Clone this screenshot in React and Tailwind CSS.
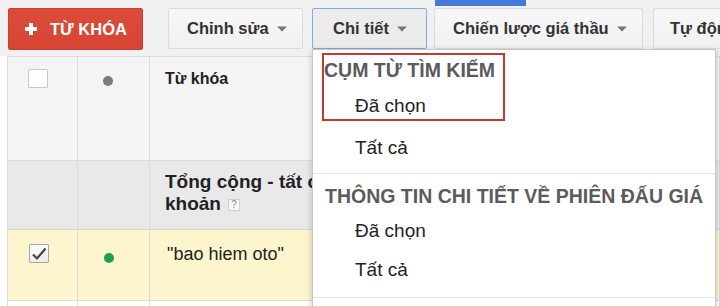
import React from "react";

const Caret = () => (
  <svg width="10" height="6" viewBox="0 0 10 6" className="shrink-0">
    <path d="M0 0.5h10L5 5.5z" fill="#777" />
  </svg>
);

const PlusIcon = () => (
  <svg width="12" height="12" viewBox="0 0 12 12" className="shrink-0">
    <rect x="4" y="0" width="4" height="12" fill="#fff" />
    <rect x="0" y="4" width="12" height="4" fill="#fff" />
  </svg>
);

const ToolButton = ({ label, className = "", active = false }) => (
  <div
    className={`h-[41px] flex items-center shrink-0 rounded-[2px] border text-[16.5px] font-bold text-[#333] ${
      active
        ? "bg-[#ececec] border-[#86a9e6]"
        : "bg-gradient-to-b from-[#f7f7f7] to-[#f1f1f1] border-[#dcdcdc]"
    } ${className}`}
  >
    <span className="whitespace-nowrap">{label}</span>
    <span className="ml-[8px]">
      <Caret />
    </span>
  </div>
);

const Checkbox = ({ checked }) => (
  <div
    className={`w-[20px] h-[19px] border rounded-[1px] flex items-center justify-center ${
      checked
        ? "border-[#a8a8a8] bg-gradient-to-b from-[#fdfdfd] to-[#ececec]"
        : "border-[#c9c9c9] bg-white"
    }`}
  >
    {checked && (
      <svg width="16" height="14" viewBox="0 0 16 14">
        <path d="M2 7.5l4 4L14.5 1.5" fill="none" stroke="#444" strokeWidth="2.2" />
      </svg>
    )}
  </div>
);

function Toolbar() {
  return (
    <div className="relative h-[56px] bg-[#f1f1f1] flex items-start pt-[8px] pl-[8px]">
      <div className="absolute top-0 left-[435px] w-[91px] h-[6px] bg-[#4479d8]" />
      <div className="w-[135px] h-[42px] shrink-0 rounded-[2px] bg-gradient-to-b from-[#dd4b39] to-[#d64434] border border-[#c9402f] flex items-center pl-[16px] text-white font-bold text-[16.5px]">
        <PlusIcon />
        <span className="ml-[13px] whitespace-nowrap">TỪ KHÓA</span>
      </div>
      <ToolButton label="Chỉnh sửa" className="ml-[25px] w-[135px] pl-[18px]" />
      <ToolButton label="Chi tiết" className="ml-[9px] w-[115px] pl-[20px]" active />
      <ToolButton label="Chiến lược giá thầu" className="ml-[7px] w-[209px] pl-[18px]" />
      <ToolButton label="Tự động" className="ml-[10px] w-[130px] pl-[16px]" />
    </div>
  );
}

function Table() {
  const cell = "border-r border-b border-[#dcdcdc] overflow-hidden";
  return (
    <div className="ml-[7px] border-l border-t border-[#dcdcdc] grid grid-cols-[70px_72px_1fr] grid-rows-[104px_69px_71px_60px]">
      {/* header */}
      <div className={`${cell} bg-[#f4f4f4] pl-[20px] pt-[12px]`}>
        <Checkbox />
      </div>
      <div className={`${cell} bg-[#f4f4f4] pl-[25px] pt-[19px]`}>
        <div className="w-[10px] h-[10px] rounded-full bg-[#7b7b7b]" />
      </div>
      <div className={`${cell} bg-[#f4f4f4] pl-[15px] pt-[13px] text-[16px] leading-[17px] font-bold text-[#222]`}>
        Từ khóa
      </div>

      {/* totals */}
      <div className={`${cell} bg-[#e9e9e9] border-b-[#d2d2d2]`} />
      <div className={`${cell} bg-[#e9e9e9] border-b-[#d2d2d2]`} />
      <div className={`${cell} bg-[#e9e9e9] border-b-[#d2d2d2] pl-[15px] pt-[10px] text-[19px] leading-[22px] font-bold text-[#222] whitespace-nowrap`}>
        Tổng cộng - tất cả tài
        <br />
        <span className="inline-flex items-center">
          khoản
          <span className="ml-[7px] mt-[2px] w-[12px] h-[12px] border border-[#cfcfcf] bg-[#f7f7f7] text-[10px] leading-[10px] text-[#8a8a8a] font-normal flex items-center justify-center">
            ?
          </span>
        </span>
      </div>

      {/* keyword row */}
      <div className={`${cell} bg-[#fdf5cd] pl-[21px] pt-[14px]`}>
        <Checkbox checked />
      </div>
      <div className={`${cell} bg-[#fdf5cd] pl-[26px] pt-[23px]`}>
        <div className="w-[10px] h-[10px] rounded-full bg-[#16a24f]" />
      </div>
      <div className={`${cell} bg-[#fdf5cd] pl-[17px] pt-[13px] text-[18px] leading-[22px] text-[#222]`}>
        "bao hiem oto"
      </div>

      <div className={`${cell} bg-white`} />
      <div className={`${cell} bg-white`} />
      <div className={`${cell} bg-white`} />
    </div>
  );
}

function DetailMenu() {
  return (
    <div className="absolute left-[312px] top-[49px] w-[404px] h-[290px] bg-white border border-[#c6c6c6] shadow-[0_2px_6px_rgba(0,0,0,0.22)] overflow-hidden">
      <div className="ml-[9px] mt-[3px] w-[183px] border-2 border-[#c33b2c] pb-[2px]">
        <div className="text-[19.5px] leading-[31px] font-bold text-[#5b5b5b] whitespace-nowrap">
          CỤM TỪ TÌM KIẾM
        </div>
        <div className="mt-[9px] pl-[31px] text-[19px] leading-[22px] text-[#222]">Đã chọn</div>
      </div>
      <div className="mt-[15px] pl-[42px] text-[19px] leading-[24px] text-[#222]">Tất cả</div>
      <div className="mt-[13px] h-px bg-[#e3e3e3]" />
      <div className="mt-[10px] pl-[12px] text-[19.5px] leading-[24px] font-bold text-[#5b5b5b] whitespace-nowrap">
        THÔNG TIN CHI TIẾT VỀ PHIÊN ĐẤU GIÁ
      </div>
      <div className="mt-[11px] pl-[42px] text-[19px] leading-[24px] text-[#222]">Đã chọn</div>
      <div className="mt-[15px] pl-[42px] text-[19px] leading-[24px] text-[#222]">Tất cả</div>
      <div className="mt-[15px] h-px bg-[#e3e3e3]" />
    </div>
  );
}

export default function App() {
  return (
    <div
      className="relative w-[720px] h-[306px] overflow-hidden bg-white"
      style={{ fontFamily: '"Liberation Sans", Arial, sans-serif' }}
    >
      <Toolbar />
      <Table />
      <DetailMenu />
    </div>
  );
}
